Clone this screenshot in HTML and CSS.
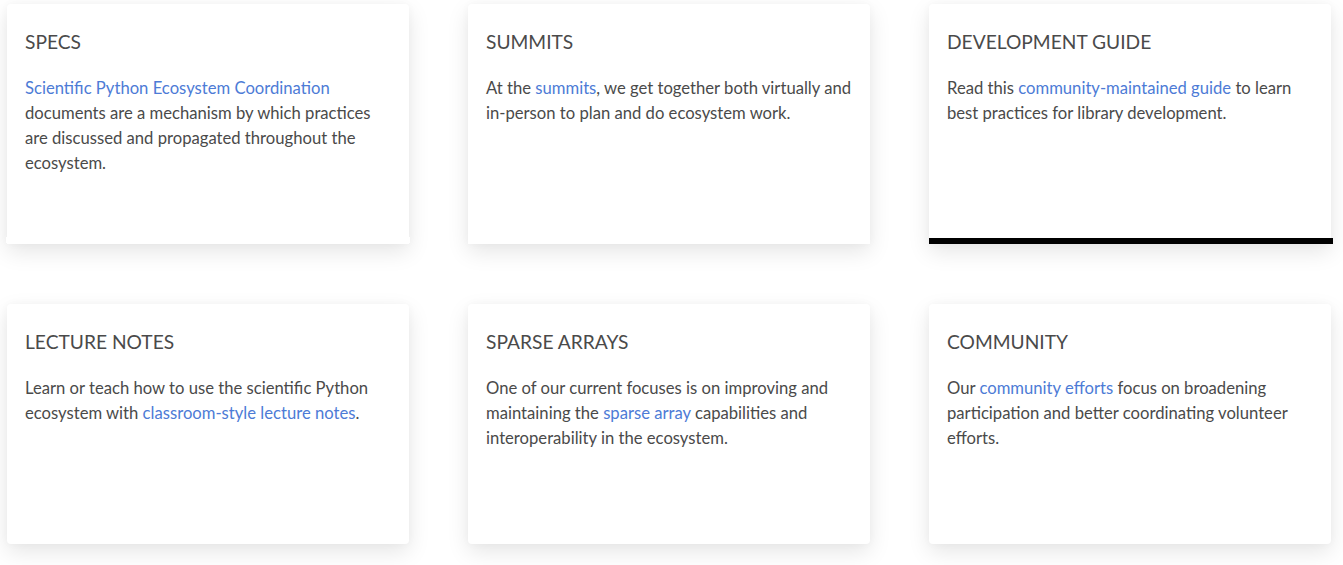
FILE: index.html
```html
<!DOCTYPE html>
<html lang="en">
<head>
<meta charset="utf-8">
<title>Cards</title>
<link rel="stylesheet" href="styles.css">
</head>
<body>
<main class="grid">
  <section class="card card--top card--strip-white">
    <h2 class="card-title">SPECS</h2>
    <p class="card-text"><a href="#">Scientific Python Ecosystem Coordination</a> documents are a mechanism by which practices are discussed and propagated throughout the ecosystem.</p>
  </section>
  <section class="card card--top">
    <h2 class="card-title">SUMMITS</h2>
    <p class="card-text">At the <a href="#">summits</a>, we get together both virtually and in-person to plan and do ecosystem work.</p>
  </section>
  <section class="card card--top card--strip-black">
    <h2 class="card-title">DEVELOPMENT GUIDE</h2>
    <p class="card-text">Read this <a href="#">community-maintained guide</a> to learn best practices for library development.</p>
  </section>
  <section class="card">
    <h2 class="card-title">LECTURE NOTES</h2>
    <p class="card-text">Learn or teach how to use the scientific Python ecosystem with <a href="#">classroom-style lecture notes</a>.</p>
  </section>
  <section class="card">
    <h2 class="card-title">SPARSE ARRAYS</h2>
    <p class="card-text">One of our current focuses is on improving and maintaining the <a href="#">sparse array</a> capabilities and interoperability in the ecosystem.</p>
  </section>
  <section class="card">
    <h2 class="card-title">COMMUNITY</h2>
    <p class="card-text">Our <a href="#">community efforts</a> focus on broadening participation and better coordinating volunteer efforts.</p>
  </section>
</main>
</body>
</html>
```
FILE: styles.css
```css
html, body {
  margin: 0;
  padding: 0;
  background: #ffffff;
}
body {
  font-family: Lato, "Noto Sans", sans-serif;
  color: #4a4a4a;
}
.grid {
  display: grid;
  grid-template-columns: repeat(3, 402px);
  grid-auto-rows: 240px;
  column-gap: 59px;
  row-gap: 60px;
  padding: 4px 0 21px 7px;
}
.card {
  position: relative;
  background: #ffffff;
  border-radius: 4px;
  box-shadow: 0 8px 22px rgba(0, 0, 0, 0.1), 0 0 8px rgba(0, 0, 0, 0.03);
  padding: 27px 18px 0 18px;
  box-sizing: border-box;
}
.card--top {
  border-bottom-left-radius: 0;
  border-bottom-right-radius: 0;
}
.card-title {
  margin: 0;
  font-size: 19.2px;
  font-weight: 400;
  line-height: 22px;
  color: #4a4a4a;
}
.card-text {
  margin: 23px 0 0 0;
  font-size: 16.65px;
  line-height: 25px;
  color: #4a4a4a;
}
.card-text a {
  color: #4d7bd6;
  text-decoration: none;
}
.card--strip-white::after,
.card--strip-black::after {
  content: "";
  position: absolute;
  bottom: 0;
  height: 6px;
}
.card--strip-white::after {
  left: -1px;
  right: -1px;
  bottom: 1px;
  background: #ffffff;
}
.card--strip-black::after {
  left: 0;
  right: -2px;
  background: #000000;
}
```
